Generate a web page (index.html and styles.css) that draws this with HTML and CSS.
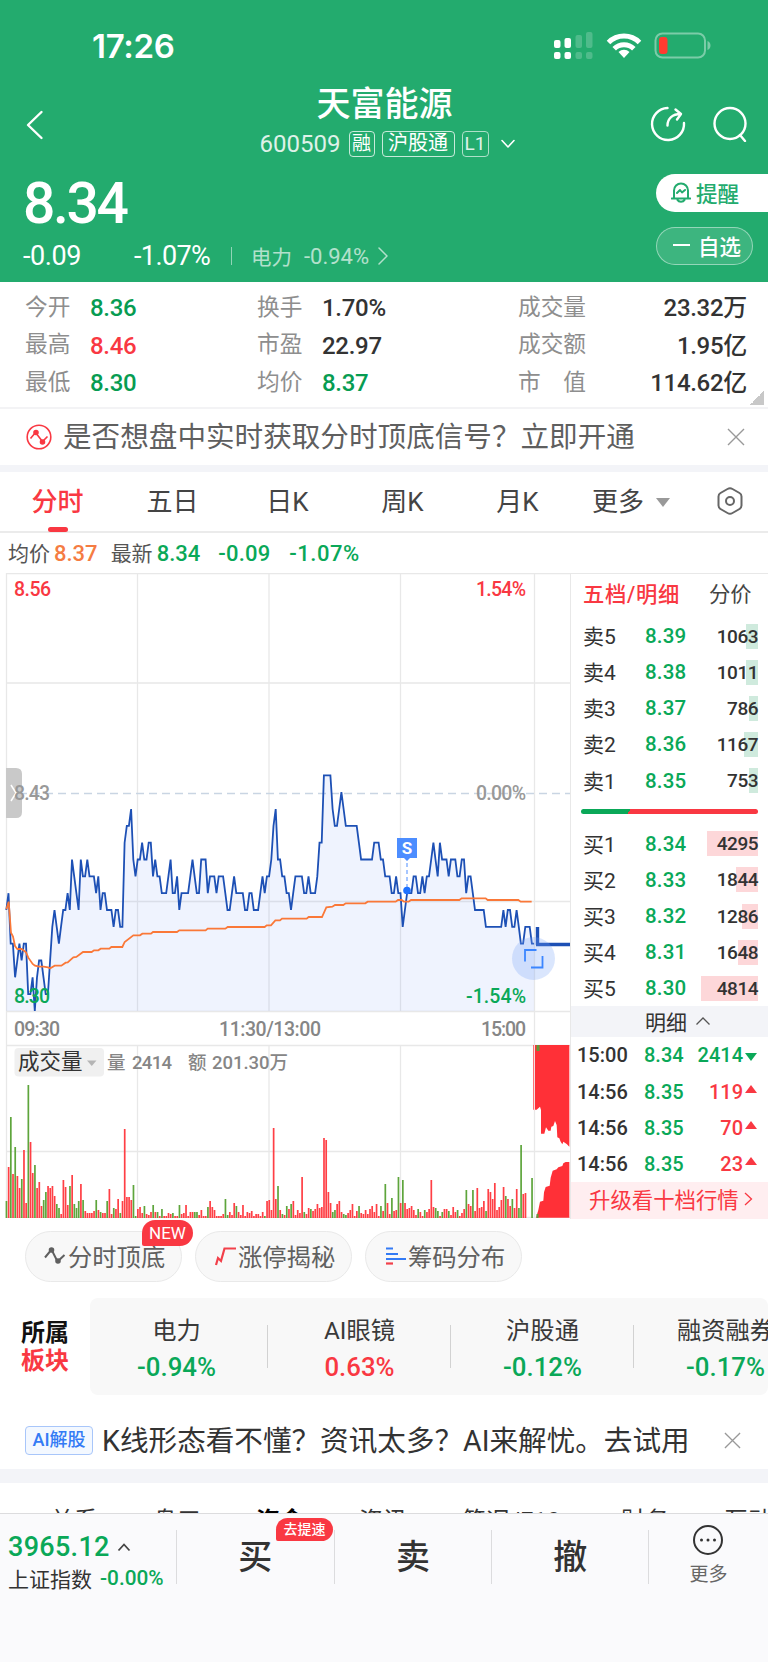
FILE: index.html
```html
<!DOCTYPE html>
<html lang="zh-CN">
<head>
    <meta charset="UTF-8">
    <meta name="viewport" content="width=device-width, initial-scale=1.0">
    <title>天富能源 600509</title>
    <link rel="stylesheet" href="styles.css">
</head>
<body>
    <header class="header">
        <div class="status-bar">
            <span class="clock">17:26</span>
            <svg class="status-icons" width="160" height="30" viewBox="0 0 160 30" fill="#fff">
                <rect x="0" y="8" width="6.5" height="8" rx="2"/>
                <rect x="10.5" y="6" width="6.5" height="10" rx="2"/>
                <rect x="21.5" y="3" width="6.5" height="13" rx="2" opacity=".2"/>
                <rect x="32" y="0" width="6.5" height="16" rx="2" opacity=".2"/>
                <rect x="0" y="20" width="6.5" height="7" rx="2"/>
                <rect x="10.5" y="20" width="6.5" height="7" rx="2"/>
                <rect x="21.5" y="20" width="6.5" height="7" rx="2" opacity=".2"/>
                <rect x="32" y="20" width="6.5" height="7" rx="2" opacity=".2"/>
                <g fill="none" stroke="#fff" stroke-width="5">
                    <path d="M54.5 10.5a22 22 0 0 1 31 0"/>
                    <path d="M60.2 16.8a14 14 0 0 1 19.6 0"/>
                </g>
                <path d="M70 26l-5.5-6a8 8 0 0 1 11 0z"/>
                <rect x="101.5" y="1.5" width="49.500" height="24" rx="7" fill="none" stroke="#fff" stroke-width="2" opacity=".4"/>
                <rect x="105" y="5" width="8.500" height="17" rx="3" fill="#ff3b30"/>
                <path d="M153.500 9c4 1 4 8 0 9z" opacity=".4"/>
            </svg>
        </div>

        <div class="nav">
            <svg class="back" width="18" height="30" viewBox="0 0 18 30"><path d="M15.500 2L2 15l13.500 13"/></svg>
            <div class="nav-title">
                <h1>天富能源</h1>
                <div class="code-row">
                    <span class="code">600509</span>
                    <span class="tag">融</span>
                    <span class="tag tag-wide">沪股通</span>
                    <span class="tag tag-l1">L1</span>
                    <svg width="14" height="10" viewBox="0 0 14 10"><path d="M1 1.500l6 6.500 6-6.500"/></svg>
                </div>
            </div>
            <div class="nav-icons">
                <svg width="36" height="36" viewBox="0 0 36 36">
                    <path d="M17.500 2A16 16 0 1 0 34 17"/>
                    <path d="M17.500 19.500c0-7 5-11.500 13-11.500M25.500 3.500l5.500 4.500-4 5.500"/>
                </svg>
                <svg width="36" height="36" viewBox="0 0 36 36">
                    <circle cx="18" cy="17.500" r="15.500"/>
                    <path d="M28 29l5 6"/>
                </svg>
            </div>
        </div>

        <div class="quote">
            <div class="quote-left">
                <div class="price">8.34</div>
                <div class="change-row">
                    <span class="change">-0.09</span>
                    <span class="change-pct">-1.07%</span>
                    <i class="bar"></i>
                    <span class="sector">电力</span>
                    <span class="sector-pct">-0.94%</span>
                    <svg width="10" height="18" viewBox="0 0 10 18"><path d="M1 1l8 8-8 8"/></svg>
                </div>
            </div>
            <div class="quote-actions">
                <div class="btn-remind">
                    <svg width="20" height="22" viewBox="0 0 20 22">
                        <path d="M3 17V9.500a7 7 0 0 1 14 0V17M.8 17.500h18.400M6.500 19c1.200 2.200 5.800 2.200 7 0M6 12l3-3 2 2.500 3-2.500"/>
                    </svg>
                    提醒
                </div>
                <div class="btn-fav"><i></i>自选</div>
            </div>
        </div>
    </header>

    <section class="stats">
        <dl><dt>今开</dt><dd class="green">8.36</dd></dl>
        <dl><dt>换手</dt><dd>1.70%</dd></dl>
        <dl class="last"><dt>成交量</dt><dd>23.32万</dd></dl>
        <dl><dt>最高</dt><dd class="red">8.46</dd></dl>
        <dl><dt>市盈</dt><dd>22.97</dd></dl>
        <dl class="last"><dt>成交额</dt><dd>1.95亿</dd></dl>
        <dl><dt>最低</dt><dd class="green">8.30</dd></dl>
        <dl><dt>均价</dt><dd class="green">8.37</dd></dl>
        <dl class="last"><dt>市&#12288;值</dt><dd>114.62亿</dd></dl>
    </section>

    <section class="notice">
        <svg width="26" height="26" viewBox="0 0 26 26" fill="none" stroke="#f93842" stroke-width="1.600">
            <circle cx="13" cy="13" r="11.800"/>
            <path d="M4.500 14.500l5-6 7 9 5-5"/>
            <circle cx="10" cy="8.500" r="2" fill="#f93842"/>
            <circle cx="16.500" cy="18" r="2" fill="#f93842"/>
        </svg>
        <p>是否想盘中实时获取分时顶底信号&#65311;立即开通</p>
        <svg class="close" width="18" height="18" viewBox="0 0 18 18"><path d="M1 1l16 16M17 1L1 17"/></svg>
    </section>

    <nav class="tabs">
        <span class="active">分时</span>
        <span>五日</span>
        <span>日K</span>
        <span>周K</span>
        <span>月K</span>
        <span class="more">更多<i></i></span>
        <span class="gear">
            <svg width="26" height="28" viewBox="0 0 26 28"><path d="M10.500 2q2.500-1.400 5 0l7 4q2 1.200 2 3.400v9.200q0 2.200-2 3.400l-7 4q-2.500 1.400-5 0l-7-4q-2-1.200-2-3.400V9.400q0-2.200 2-3.400z"/><circle cx="13" cy="14" r="4"/></svg>
        </span>
    </nav>

    <div class="line-info">
        <span class="name">均价</span><b class="orange">8.37</b>
        <span class="name second">最新</span><b class="up">8.34</b>
        <b class="up diff">-0.09</b>
        <b class="up pct">-1.07%</b>
    </div>

    <main class="market">
        <svg class="chart" width="570" height="645" viewBox="0 0 570 645">
            <path class="grid" d="M6.500 0V645M137.500 0V438M137.500 472V645M269 0V438M269 472V645M400.500 0V438M400.500 472V645M534.500 0V645M6 .5H570M6 110H570M6 328.500H570M6 438.500H570M6 472.500H570M6 578.500H570M6 644.500H570"/>
            <path class="zero" d="M6 220.500H570"/>
            <path id="area"/>
            <path id="price"/>
            <polyline class="avg" transform="translate(0 -3) scale(.33333)" points="19,1018 26,995 33,1088 39,1100 45,1128 52,1137 65,1137 78,1147 85,1163 98,1182 105,1187 118,1190 131,1190 144,1192 151,1195 164,1187 184,1187 197,1178 203,1177 220,1162 229,1161 249,1146 275,1146 282,1141 295,1141 302,1136 328,1136 334,1131 367,1131 374,1116 400,1096 420,1096 427,1091 453,1091 459,1086 531,1086 538,1081 617,1081 623,1076 676,1076 683,1071 794,1071 800,1066 813,1066 826,1051 840,1051 846,1046 920,1046 926,1041 966,1041 979,1012 997,1010 1005,1005 1030,1005 1037,1000 1096,1000 1103,995 1187,995 1194,990 1205,990 1212,995 1226,995 1233,990 1378,990 1385,985 1457,985 1463,990 1555,990 1562,995 1595,995"/>
            <path class="auction" d="M537.500 372v-18M536 371.500H570"/>

            <!-- side drawer handle -->
            <path d="M6 195h10q6 0 6 6v38q0 6-6 6H6z" fill="#c9c9c9"/>
            <path d="M11 212l5 8-5 8" fill="none" stroke="#fff" stroke-width="1.500"/>

            <!-- sell marker -->
            <path d="M397 265h20v20h-7l-3 3-3-3h-7z" fill="#4c8dff"/>
            <text class="mark" x="407" y="281" text-anchor="middle">S</text>
            <path d="M407 290v24" stroke="#4c8dff" stroke-dasharray="4 3"/>
            <circle cx="407" cy="317.500" r="3.800" fill="#1f72ff"/>

            <circle cx="533.500" cy="385.500" r="21.500" fill="#78a2f7" opacity=".27"/>
            <path d="M525 388.500V377h11.500M531 394.500h11.500V383" fill="none" stroke="#3b86ff" stroke-width="1.800"/>

            <g class="axis">
                <text x="14" y="23" fill="#f93842" textLength="37">8.56</text>
                <text x="526" y="23" fill="#f93842" text-anchor="end" textLength="50">1.54%</text>
                <text x="14" y="227" fill="#999" textLength="36">8.43</text>
                <text x="526" y="227" fill="#999" text-anchor="end" textLength="50">0.00%</text>
                <text x="14" y="430" fill="#0aa858" textLength="36">8.30</text>
                <text x="526" y="430" fill="#0aa858" text-anchor="end" textLength="60">-1.54%</text>
                <text x="14" y="463" textLength="46">09:30</text>
                <text x="219" y="463" textLength="102">11:30/13:00</text>
                <text x="526" y="463" text-anchor="end" textLength="45">15:00</text>
            </g>

            <rect x="14.500" y="475" width="89.500" height="28.500" rx="4" fill="#f0f0f0"/>
            <text class="vol-name" x="18" y="496">成交量</text>
            <path d="M87 487.500h9.500l-4.750 5.500z" fill="#b5b5b5"/>
            <g class="axis vol-text">
                <text x="107" y="496">量</text>
                <text x="132" y="496" textLength="40">2414</text>
                <text x="188" y="496">额</text>
                <text x="212" y="496" textLength="76">201.30万</text>
            </g>
            <g id="volume"></g>

            <!-- closing auction volume -->
            <path transform="translate(290 457) scale(.33333)" fill="#ff3037" d="M730 45H838V350L830 342 820 335 817 343 812 335 808 325 802 322 800 285 795 273 790 288 784 290 782 302 775 302 768 292 763 311 753 311V240L750 230 745 235 740 239H730zM738 563L745 540 750 515 760 512 762 487 767 471 779 467 782 443 788 422 800 418 805 412 817 408 820 400 827 396H838V563z"/>
            <path d="M534.500 472v66" stroke="#f2dede"/>
            <path d="M536.500 472h3v6h-3zM536.500 641h2v4h-2z" fill="#5e9e3b"/>
        </svg>

        <aside class="book">
            <div class="book-head"><b>五档/明细</b><span>分价</span></div>
            <ul class="levels" id="asks"></ul>
            <div class="ratio"></div>
            <ul class="levels" id="bids"></ul>
            <div class="detail-head">明细<svg width="16" height="10" viewBox="0 0 16 10"><path d="M1.500 8.500L8 2l6.500 6.500"/></svg></div>
            <ul class="ticks">
                <li><span>15:00</span><b>8.34</b><em class="green-t">2414</em><i class="down"></i></li>
                <li><span>14:56</span><b>8.35</b><em>119</em><i></i></li>
                <li><span>14:56</span><b>8.35</b><em>70</em><i></i></li>
                <li><span>14:56</span><b>8.35</b><em>23</em><i></i></li>
            </ul>
            <div class="upgrade">升级看十档行情<svg width="9" height="14" viewBox="0 0 9 14"><path d="M1 1l6.500 6L1 13"/></svg></div>
        </aside>
    </main>

    <section class="tools">
        <div class="pill">
            <svg width="24" height="20" viewBox="0 0 24 20" fill="none" stroke="#606060" stroke-width="2">
                <path d="M2 11.500l6.500-8 6 12 7-6.500"/>
                <circle cx="8.500" cy="4" r="1.800" fill="#606060"/><circle cx="15" cy="15" r="1.800" fill="#606060"/>
            </svg>
            分时顶底
            <span class="badge-new">NEW</span>
        </div>
        <div class="pill">
            <svg width="24" height="20" viewBox="0 0 24 20" fill="none" stroke="#f2404a" stroke-width="2.200"><path d="M3 19l2-7 3 3 3.500-12.500H23"/></svg>
            涨停揭秘
        </div>
        <div class="pill">
            <svg width="24" height="20" viewBox="0 0 24 20" fill="none" stroke="#347bf5" stroke-width="2.200"><path d="M3 2.500h7M3 8h12M3 13h20"/><path d="M3 17.500h7" stroke="#f2404a"/></svg>
            筹码分布
        </div>
    </section>

    <section class="blocks">
        <div class="blocks-title">所属<br><span>板块</span></div>
        <div class="blocks-list">
            <div class="block"><p>电力</p><b>-0.94%</b></div>
            <div class="block"><p>AI眼镜</p><b class="red-t">0.63%</b></div>
            <div class="block"><p>沪股通</p><b>-0.12%</b></div>
            <div class="block"><p>融资融券</p><b>-0.17%</b></div>
        </div>
    </section>

    <section class="ai-row">
        <span class="ai-tag">AI解股</span>
        <p>K线形态看不懂&#65311;资讯太多&#65311;AI来解忧。去试用</p>
        <svg class="close" width="17" height="17" viewBox="0 0 18 18"><path d="M1 1l16 16M17 1L1 17"/></svg>
    </section>

    <nav class="sub-tabs">
        <span>关系</span><span>盘口</span><span class="active">资金</span><span>资讯</span><span class="f10">简况/F10</span><span>财务</span><span>互动</span>
    </nav>

    <footer class="bottom-bar">
        <div class="index">
            <div class="index-price">3965.12<svg width="14" height="9" viewBox="0 0 14 9"><path d="M1.500 7.500L7 1.500l5.500 6"/></svg></div>
            <div class="index-name">上证指数<b>-0.00%</b></div>
        </div>
        <div class="trade">买<span class="badge-fast">去提速</span></div>
        <div class="trade">卖</div>
        <div class="trade">撤</div>
        <div class="bottom-more">
            <svg width="32" height="32" viewBox="0 0 32 32"><circle cx="16" cy="16" r="14"/><g><circle cx="9.500" cy="16" r="1.500"/><circle cx="16" cy="16" r="1.500"/><circle cx="22.500" cy="16" r="1.500"/></g></svg>
            更多
        </div>
    </footer>

    <script src="chart.js"></script>
</body>
</html>
```
FILE: styles.css
```css
* {
    margin: 0;
    padding: 0;
    box-sizing: border-box;
}

body {
    width: 768px;
    height: 1662px;
    overflow: hidden;
    background: #fff;
    color: #333;
    font-family: Roboto, "Noto Sans CJK SC", sans-serif;
}

svg {
    display: block;
    flex: none;
}

ul {
    list-style: none;
}

i, em {
    font-style: normal;
}

/* header */
.header {
    height: 282px;
    background: #23ab6e;
    color: #fff;
}

.header svg path, .header svg circle {
    stroke-linecap: round;
    stroke-linejoin: round;
}

.status-bar {
    display: flex;
    justify-content: space-between;
    height: 80px;
    padding: 25px 54px 0 92px;
}

.clock {
    font: 600 33px/42px Inter, sans-serif;
    letter-spacing: -0.3px;
}

.status-icons {
    margin-top: 7px;
}

.status-icons path {
    stroke-linecap: butt !important;
}

.nav {
    display: flex;
    justify-content: space-between;
    height: 90px;
    padding: 0 20px 0 26px;
}

.nav > svg, .nav-icons svg, .code-row svg {
    fill: none;
    stroke: #fff;
    stroke-width: 2.4;
}

.back {
    margin-top: 30px;
}

.nav-title {
    width: 260px;
    margin-left: 75px;
    padding-top: 1px;
}

.nav-title h1 {
    font-size: 34px;
    font-weight: 500;
    line-height: 46px;
    text-align: center;
}

.code-row {
    display: flex;
    align-items: center;
    height: 30px;
    margin-top: 2px;
    margin-left: 5px;
}

.code {
    width: 89px;
    font-size: 24px;
    opacity: .85;
}

.tag {
    width: 26px;
    height: 26px;
    margin-right: 7px;
    border: 1px solid rgba(255, 255, 255, .75);
    border-radius: 4px;
    font-size: 19px;
    line-height: 23px;
    text-align: center;
}

.tag-wide {
    width: 73px;
    font-size: 20px;
}

.tag-l1 {
    width: 27px;
    margin-right: 12px;
    opacity: .85;
}

.code-row svg {
    stroke-width: 1.6;
}

.nav-icons {
    display: flex;
    gap: 26px;
    margin-top: 26px;
}

.quote {
    display: flex;
    justify-content: space-between;
}

.quote-left {
    padding-left: 23px;
}

.price {
    height: 68px;
    font-size: 57px;
    font-weight: 500;
    line-height: 68px;
    letter-spacing: -2.4px;
}

.change-row {
    display: flex;
    align-items: center;
    height: 36px;
    font-size: 27px;
}

.change {
    width: 111px;
    letter-spacing: -0.4px;
}

.change-pct {
    width: 97px;
    letter-spacing: -0.6px;
}

.bar {
    width: 1px;
    height: 18px;
    margin-right: 19px;
    background: rgba(255, 255, 255, .5);
}

.sector {
    width: 53px;
    font-size: 20.5px;
    opacity: .65;
}

.sector-pct {
    width: 74px;
    font-size: 22px;
    opacity: .65;
}

.change-row svg {
    fill: none;
    stroke: #fff;
    stroke-width: 1.5;
    opacity: .65;
}

.quote-actions {
    width: 112px;
    padding-top: 4px;
    font-size: 21.5px;
    font-weight: 500;
}

.btn-remind {
    display: flex;
    align-items: center;
    gap: 5px;
    height: 38px;
    padding: 0 0 2px 15px;
    border-radius: 19px 0 0 19px;
    background: #fff;
    color: #23ab6e;
}

.btn-remind svg {
    fill: none;
    stroke: #23ab6e;
    stroke-width: 2;
}

.btn-fav {
    display: flex;
    align-items: center;
    gap: 8px;
    width: 97px;
    height: 38px;
    margin-top: 15px;
    padding: 0 0 2px 16px;
    border: 1px solid rgba(255, 255, 255, .45);
    border-radius: 19px;
    background: rgba(255, 255, 255, .12);
}

.btn-fav i {
    width: 17px;
    height: 2px;
    background: #fff;
}

/* stats */
.stats {
    display: grid;
    grid-template-columns: 232px 261px 229px;
    grid-auto-rows: 37.6px;
    height: 127px;
    padding: 7px 0 0 25px;
    border-bottom: 2px solid #f3f3f5;
    background: linear-gradient(135deg, transparent 50%, #c8c8c8 50%) no-repeat 750px 109px / 14px 14px;
}

.stats dl {
    display: flex;
    align-items: center;
}

.stats dt {
    width: 65px;
    color: #8e8e8e;
    font-size: 22.7px;
    line-height: 30px;
}

.stats dd {
    font-size: 24px;
    font-weight: 500;
    line-height: 30px;
    padding-top: 1px;
    letter-spacing: -0.3px;
}

.stats .last {
    justify-content: space-between;
}

.stats .last dt {
    width: 80px;
}

.green {
    color: #079c52;
}

.red {
    color: #f93842;
}

/* notice */
.notice {
    display: flex;
    align-items: center;
    height: 56px;
    padding: 0 23px 0 26px;
}

.notice p {
    flex: 1;
    margin-left: 11px;
    color: #5f5f5f;
    font-size: 28.6px;
    line-height: 40px;
    white-space: nowrap;
}

.close {
    fill: none;
    stroke: #999;
    stroke-width: 1.4;
}

/* period tabs */
.tabs {
    display: grid;
    grid-template-columns: 115px 115px 115px 115px 115px 109px 84px;
    height: 68px;
    border-top: 7px solid #f3f4f8;
    border-bottom: 2px solid #ebebeb;
    font-size: 26px;
    line-height: 60px;
    text-align: center;
    color: #444;
}

.tabs .active {
    position: relative;
    color: #f93842;
    font-weight: 500;
}

.tabs .active::after {
    content: "";
    position: absolute;
    left: 48px;
    bottom: 0;
    width: 20px;
    height: 5px;
    border-radius: 2.5px;
    background: #f93842;
}

.tabs .more {
    display: flex;
    align-items: center;
    gap: 12px;
    height: 60px;
    padding-left: 17px;
}

.tabs .more i {
    border: 7px solid transparent;
    border-top: 9px solid #999;
    border-bottom: 0;
}

.gear svg {
    margin: 15px 0 0 33px;
    fill: none;
    stroke: #666;
    stroke-width: 2;
}

.line-info {
    display: flex;
    align-items: center;
    height: 40px;
    padding-left: 8px;
    font-size: 21px;
}

.line-info .name {
    width: 46px;
    padding-bottom: 2px;
    color: #555;
}

.line-info b {
    font-size: 22px;
    font-weight: 500;
}

.line-info .second {
    margin-left: 13px;
}

.line-info .orange {
    color: #f57c42;
}

.line-info .up {
    color: #0aa858;
}

.line-info .diff {
    margin-left: 18px;
    letter-spacing: .2px;
}

.line-info .pct {
    margin-left: 19px;
    letter-spacing: .5px;
}

/* chart */
.market {
    display: grid;
    grid-template-columns: 570px 198px;
    height: 645px;
}

.grid {
    fill: none;
    stroke: #e8e8e8;
    stroke-width: 1.3;
}

.zero {
    stroke: #c9d5e3;
    stroke-width: 1.3;
    stroke-dasharray: 8 5;
}

#area {
    fill: rgba(76, 126, 245, .09);
}

#price {
    fill: none;
    stroke: #1d50b5;
    stroke-width: 1.8;
}

.avg {
    fill: none;
    stroke: #fa7838;
    stroke-width: 5.3;
}

.auction {
    stroke: #1d50b5;
    stroke-width: 3.4;
}

.axis {
    fill: #868686;
    font-size: 19.5px;
    font-weight: 500;
}

.vol-text {
    font-size: 18.5px;
}

.vol-name {
    fill: #333;
    font-size: 21.5px;
}

.mark {
    fill: #fff;
    font-size: 17px;
    font-weight: 700;
}

/* order book */
.book {
    border-top: 1px solid #e8e8e8;
    border-left: 1px solid #e8e8e8;
}

.book-head {
    display: flex;
    height: 44px;
    padding-left: 12px;
    font-size: 21.3px;
    line-height: 42px;
    color: #444;
}

.book-head b {
    width: 126px;
    color: #f93842;
    font-weight: 500;
    letter-spacing: .7px;
}

.levels li {
    display: grid;
    grid-template-columns: 62px 50px 63px;
    align-items: center;
    height: 36.15px;
    padding-left: 12px;
    font-size: 21px;
}

.levels span {
    padding-bottom: 2px;
}

.levels b {
    color: #0aa858;
    font-size: 20.5px;
    font-weight: 500;
    letter-spacing: .2px;
}

.levels em {
    display: flex;
    justify-content: flex-end;
    align-items: center;
    height: 25px;
    font-size: 19px;
    font-weight: 500;
    letter-spacing: -0.5px;
    background: linear-gradient(#cfeadd, #cfeadd) no-repeat right / var(--w) 100%;
}

#bids em {
    background-image: linear-gradient(#fdd7d9, #fdd7d9);
}

.ratio {
    width: 177px;
    height: 5px;
    margin: 10px 0 12px 10px;
    border-radius: 3px;
    background: linear-gradient(120deg, #0aa858 27.5%, #f93842 27.5%);
}

.detail-head {
    display: flex;
    align-items: center;
    gap: 8px;
    height: 31px;
    padding: 0 0 2px 74px;
    background: #f3f4f8;
    font-size: 21px;
}

.detail-head svg {
    fill: none;
    stroke: #555;
    stroke-width: 1.3;
}

.ticks li {
    display: grid;
    grid-template-columns: 67px 42px 57px 16px;
    align-items: center;
    height: 36.1px;
    padding-left: 6px;
    font-size: 20px;
    font-weight: 500;
}

.ticks b {
    color: #0aa858;
    font-weight: 500;
}

.ticks em {
    color: #f93842;
    text-align: right;
}

.ticks .green-t {
    color: #0aa858;
}

.ticks i {
    margin: 0 0 5px 2px;
    width: 0;
    border: 6.5px solid transparent;
    border-top: 0;
    border-bottom: 8px solid #f93842;
}

.ticks .down {
    margin: 3px 0 0 2px;
    border-top: 8px solid #0aa858;
    border-bottom: 0;
}

.upgrade {
    display: flex;
    align-items: center;
    gap: 5px;
    height: 37px;
    padding: 0 0 3px 18px;
    background: #ffeef0;
    color: #f93842;
    font-size: 21.4px;
}

.upgrade svg {
    fill: none;
    stroke: #f93842;
    stroke-width: 1.3;
}

/* tool pills */
.tools {
    display: flex;
    gap: 13px;
    padding: 13px 25px 0;
}

.pill {
    position: relative;
    display: flex;
    align-items: center;
    gap: 1px;
    width: 157px;
    height: 51px;
    padding: 0 0 2px 17px;
    border: 1px solid #e9e9e9;
    border-radius: 26px;
    background: #f8f8f8;
    color: #606060;
    font-size: 24.3px;
    white-space: nowrap;
}

.badge-new {
    position: absolute;
    left: 116px;
    top: -12px;
    width: 51px;
    height: 26px;
    border-radius: 13px 13px 13px 2px;
    background: #f93842;
    color: #fff;
    font-size: 17px;
    line-height: 27px;
    text-align: center;
}

/* blocks */
.blocks {
    display: flex;
    height: 97px;
    margin-top: 16px;
}

.blocks-title {
    width: 90px;
    padding: 21px 0 0 21px;
    color: #111;
    font-size: 24px;
    font-weight: 700;
    line-height: 28px;
}

.blocks-title span {
    color: #f93842;
}

.blocks-list {
    display: flex;
    width: 678px;
    overflow: hidden;
    border-radius: 8px;
    background: #f8f8f8;
}

.block {
    flex: none;
    width: 183px;
    padding-top: 14px;
    text-align: center;
    color: #3a3a3a;
    font-size: 24.3px;
    line-height: 37px;
    background: linear-gradient(#d2d2d2, #d2d2d2) no-repeat right 27px / 1px 43px;
}

.block:first-child {
    margin-left: -5px;
}

.block b {
    color: #0aa858;
    font-size: 25.8px;
    font-weight: 500;
}

.block .red-t {
    color: #f93842;
}

/* AI row */
.ai-row {
    display: flex;
    align-items: center;
    height: 74px;
    padding: 17px 27px 0 25px;
}

.ai-tag {
    width: 68px;
    height: 29px;
    border: 1px solid #a8c6fa;
    border-radius: 4px;
    background: #f3f8ff;
    color: #347bf5;
    font-size: 18px;
    font-weight: 500;
    line-height: 26px;
    text-align: center;
}

.ai-row p {
    flex: 1;
    margin-left: 9px;
    font-size: 28.6px;
    line-height: 40px;
    white-space: nowrap;
}

.sub-tabs {
    display: flex;
    gap: 55px;
    height: 44px;
    padding: 20px 0 0 50px;
    overflow: hidden;
    border-top: 14px solid #f3f4f8;
    font-size: 24px;
    line-height: 36px;
    white-space: nowrap;
}

.sub-tabs .active {
    color: #000;
    font-weight: 700;
}

.sub-tabs span {
    flex: none;
}

.sub-tabs .f10 {
    width: 104px;
}

/* bottom bar */
.bottom-bar {
    display: flex;
    height: 149px;
    padding-top: 16px;
    border-top: 1px solid #dcdcde;
    background: #fafafc;
}

.index {
    width: 176px;
    padding-left: 8px;
}

.index-price {
    display: flex;
    align-items: center;
    gap: 7px;
    height: 34px;
    color: #0aa858;
    font-size: 27px;
    letter-spacing: .3px;
    font-weight: 500;
}

.index-price svg {
    fill: none;
    stroke: #444;
    stroke-width: 1.8;
}

.index-name {
    display: flex;
    align-items: center;
    gap: 8px;
    height: 28px;
    font-size: 21px;
}

.index-name b {
    color: #0aa858;
    font-size: 20.8px;
    font-weight: 500;
}

.trade {
    position: relative;
    width: 157.7px;
    height: 54px;
    border-left: 1px solid #dcdcde;
    font-size: 34px;
    font-weight: 500;
    line-height: 54px;
    text-align: center;
}

.trade:nth-child(4) {
    border-right: 1px solid #dcdcde;
}

.badge-fast {
    position: absolute;
    left: 99px;
    top: -12px;
    width: 57px;
    height: 23px;
    border-radius: 12px 12px 12px 2px;
    background: #f93842;
    color: #fff;
    font-size: 14px;
    line-height: 22px;
}

.bottom-more {
    display: flex;
    flex-direction: column;
    align-items: center;
    width: 119px;
    height: 66px;
    margin-top: -6px;
    color: #666;
    font-size: 19px;
    line-height: 31px;
}

.bottom-more svg {
    fill: none;
    stroke: #333;
    stroke-width: 2;
    margin-bottom: 3px;
}

.bottom-more g {
    fill: #333;
    stroke: none;
}
```
FILE: chart.js
```js
// one hex digit per minute, in ticks of 0.01 above 8.30
const prices = "6744234344" + "1120233211" + "3565456676" + "9876988988" + "8786776665" +
    "6655ABBC98" + "99A99AA898" + "8777897786" + "7777898779" + "9978887888" +
    "7667877776" + "6776667878" + "89BC998877" + "6788887787" + "778AAEEEEC" +
    "BBCDCBBBBB" + "BA999999AA" + "A998887787" + "7567778877" + "87889A98A9" +
    "9989998899" + "7887666665" + "5555555656" + "6556544555" + "44";

// volume per minute, negative = falling (green)
const volumes = [
    -17, 51, -101, 44, -71, 42, 30, -39, 68, 15, -133, 76, 45, -53, 30, 36, 12, -18, -26, 32,
    30, 32, 22, -14, -10, 4, 38, 31, 13, -32, 43, -14, -10, -17, 34, -18, 7, 5, 5, 5,
    7, -18, 8, -6, 5, 5, -17, 29, 4, -10, 9, 19, -5, 17, 89, 21, 21, 18, -33, -2,
    9, 11, 5, -12, 4, 3, 6, -13, 6, -6, 2, -9, 2, 2, 5, 4, -5, 2, 2, -13,
    4, 5, 13, 2, 6, 6, -6, -6, 3, 8, 2, 2, -11, 17, 11, 8, 2, 2, 2, 4,
    -19, -3, 6, 3, 15, -12, 6, 3, 13, 2, 6, 5, 7, 2, 4, 4, 2, 6, -2, 17,
    18, 8, 90, 19, -32, 8, -4, 3, -12, 9, -14, 17, 3, 8, 5, 41, -6, 4, 10, -9,
    7, 9, 14, 10, 11, 80, 78, 26, 15, -6, -8, 14, 17, 6, -4, -3, 5, 8, 14, 2,
    7, -12, 5, 4, 8, 4, 9, 12, 6, 14, 2, -12, 7, -34, 15, 4, -20, 7, 8, -41,
    15, -38, 15, 9, 10, 12, 8, 3, -9, 6, 2, -8, 6, 9, 38, 11, -10, -7, 2, -6,
    9, 9, -7, 3, 11, 6, -8, 2, 5, 9, -28, 14, 12, -28, 7, 30, 10, 11, 17, -7,
    29, 26, 19, 35, 8, 11, 18, 31, -22, 19, 12, -19, 10, 29, -10, -73, 24, 25, 0, 0, -40
];

const left = 6.3;
const step = 2.19;

const points = [...prices].map((c, i) => {
    const x = left + i * step;
    const y = 438 - parseInt(c, 16) * 16.83;
    return x.toFixed(1) + " " + y.toFixed(1);
});
document.getElementById("price").setAttribute("d", "M" + points.join("L"));
document.getElementById("area").setAttribute("d", "M" + left + " 438L" + points.join("L") + "V438z");

document.getElementById("volume").innerHTML = volumes.map((v, i) => {
    const h = Math.abs(v);
    const color = v < 0 ? "#5ea53c" : "#ff3f45";
    return `<rect x="${(left - 0.7 + i * step).toFixed(2)}" y="${645 - h}" width="1.7" height="${h}" fill="${color}"/>`;
}).join("");

// order book: name, price, size, bar width
const asks = [["卖5", "8.39", 1063, 12], ["卖4", "8.38", 1011, 12], ["卖3", "8.37", 786, 9], ["卖2", "8.36", 1167, 14], ["卖1", "8.35", 753, 9]];
const bids = [["买1", "8.34", 4295, 51], ["买2", "8.33", 1844, 22], ["买3", "8.32", 1286, 16], ["买4", "8.31", 1648, 20], ["买5", "8.30", 4814, 57]];

function renderLevels(id, rows) {
    document.getElementById(id).innerHTML = rows.map(([name, price, size, w]) =>
        `<li><span>${name}</span><b>${price}</b><em style="--w:${w}px">${size}</em></li>`).join("");
}
renderLevels("asks", asks);
renderLevels("bids", bids);
```
